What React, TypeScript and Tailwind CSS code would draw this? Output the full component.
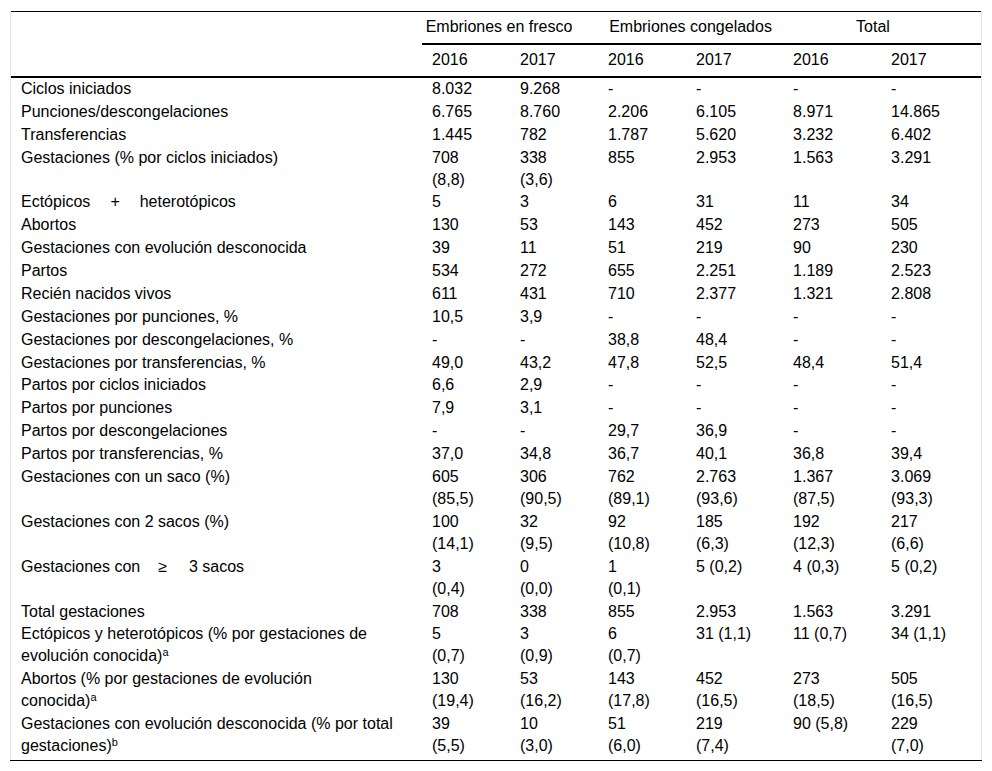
import React from "react";

type Row = { label: React.ReactNode; cells: string[] };

const Sup = ({ c }: { c: string }) => (
  <sup className="text-[11px] leading-none">{c}</sup>
);

const rows: Row[] = [
  { label: "Ciclos iniciados", cells: ["8.032", "9.268", "-", "-", "-", "-"] },
  { label: "Punciones/descongelaciones", cells: ["6.765", "8.760", "2.206", "6.105", "8.971", "14.865"] },
  { label: "Transferencias", cells: ["1.445", "782", "1.787", "5.620", "3.232", "6.402"] },
  { label: "Gestaciones (% por ciclos iniciados)", cells: ["708\n(8,8)", "338\n(3,6)", "855", "2.953", "1.563", "3.291"] },
  {
    label: (
      <>
        Ectópicos<span className="ml-[20px]">+</span>
        <span className="ml-[20px]">heterotópicos</span>
      </>
    ),
    cells: ["5", "3", "6", "31", "11", "34"],
  },
  { label: "Abortos", cells: ["130", "53", "143", "452", "273", "505"] },
  { label: "Gestaciones con evolución desconocida", cells: ["39", "11", "51", "219", "90", "230"] },
  { label: "Partos", cells: ["534", "272", "655", "2.251", "1.189", "2.523"] },
  { label: "Recién nacidos vivos", cells: ["611", "431", "710", "2.377", "1.321", "2.808"] },
  { label: "Gestaciones por punciones, %", cells: ["10,5", "3,9", "-", "-", "-", "-"] },
  { label: "Gestaciones por descongelaciones, %", cells: ["-", "-", "38,8", "48,4", "-", "-"] },
  { label: "Gestaciones por transferencias, %", cells: ["49,0", "43,2", "47,8", "52,5", "48,4", "51,4"] },
  { label: "Partos por ciclos iniciados", cells: ["6,6", "2,9", "-", "-", "-", "-"] },
  { label: "Partos por punciones", cells: ["7,9", "3,1", "-", "-", "-", "-"] },
  { label: "Partos por descongelaciones", cells: ["-", "-", "29,7", "36,9", "-", "-"] },
  { label: "Partos por transferencias, %", cells: ["37,0", "34,8", "36,7", "40,1", "36,8", "39,4"] },
  {
    label: "Gestaciones con un saco (%)",
    cells: ["605\n(85,5)", "306\n(90,5)", "762\n(89,1)", "2.763\n(93,6)", "1.367\n(87,5)", "3.069\n(93,3)"],
  },
  {
    label: "Gestaciones con 2 sacos (%)",
    cells: ["100\n(14,1)", "32\n(9,5)", "92\n(10,8)", "185\n(6,3)", "192\n(12,3)", "217\n(6,6)"],
  },
  {
    label: (
      <>
        Gestaciones con<span className="ml-[18px]">≥</span>
        <span className="ml-[22px]">3 sacos</span>
      </>
    ),
    cells: ["3\n(0,4)", "0\n(0,0)", "1\n(0,1)", "5 (0,2)", "4 (0,3)", "5 (0,2)"],
  },
  { label: "Total gestaciones", cells: ["708", "338", "855", "2.953", "1.563", "3.291"] },
  {
    label: (
      <>
        Ectópicos y heterotópicos (% por gestaciones de
        <br />
        evolución conocida)
        <Sup c="a" />
      </>
    ),
    cells: ["5\n(0,7)", "3\n(0,9)", "6\n(0,7)", "31 (1,1)", "11 (0,7)", "34 (1,1)"],
  },
  {
    label: (
      <>
        Abortos (% por gestaciones de evolución
        <br />
        conocida)
        <Sup c="a" />
      </>
    ),
    cells: ["130\n(19,4)", "53\n(16,2)", "143\n(17,8)", "452\n(16,5)", "273\n(18,5)", "505\n(16,5)"],
  },
  {
    label: (
      <>
        Gestaciones con evolución desconocida (% por total
        <br />
        gestaciones)
        <Sup c="b" />
      </>
    ),
    cells: ["39\n(5,5)", "10\n(3,0)", "51\n(6,0)", "219\n(7,4)", "90 (5,8)", "229\n(7,0)"],
  },
];

function Cell({ v }: { v: string }) {
  const parts = v.split("\n");
  return (
    <td className="align-top pl-[10px] pr-0 py-[0.45px]">
      {parts.map((p, i) => (
        <div key={i}>{p}</div>
      ))}
    </td>
  );
}

export default function App() {
  return (
    <div
      className="bg-white text-black w-[992px] h-[771px] pt-[11px] px-[10px]"
      style={{ fontFamily: '"Liberation Sans", Arial, sans-serif' }}
    >
      <div className="border-x border-[#e6e6e6] pb-[2px]">
        <table className="w-full table-fixed border-collapse text-[16px] leading-[22px]">
          <colgroup>
            <col className="w-[411px]" />
            <col className="w-[88px]" />
            <col className="w-[88px]" />
            <col className="w-[88px]" />
            <col className="w-[97px]" />
            <col className="w-[98px]" />
            <col />
          </colgroup>
          <thead>
            <tr className="border-t border-black h-[32px]">
              <th />
              <th colSpan={2} className="font-normal text-center align-middle border-b-2 border-black pl-0 pr-[22px]">
                Embriones en fresco
              </th>
              <th colSpan={2} className="font-normal text-center align-middle border-b-2 border-black px-0">
                Embriones congelados
              </th>
              <th colSpan={2} className="font-normal text-center align-middle border-b-2 border-black pl-0 pr-[18px]">
                Total
              </th>
            </tr>
            <tr className="h-[33px] border-b-2 border-black">
              <th />
              {["2016", "2017", "2016", "2017", "2016", "2017"].map((y, i) => (
                <th key={i} className="font-normal text-left align-middle pl-[10px]">
                  {y}
                </th>
              ))}
            </tr>
          </thead>
          <tbody>
            {rows.map((r, i) => (
              <tr key={i}>
                <td className="align-top pl-[10px] py-[0.45px]">{r.label}</td>
                {r.cells.map((c, j) => (
                  <Cell key={j} v={c} />
                ))}
              </tr>
            ))}
          </tbody>
        </table>
      </div>
      <div className="h-px bg-black" />
    </div>
  );
}
